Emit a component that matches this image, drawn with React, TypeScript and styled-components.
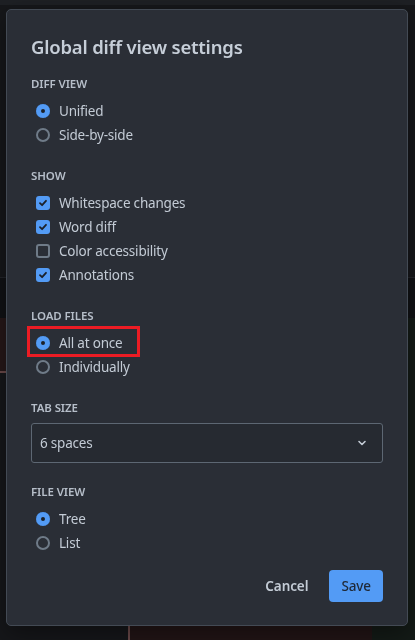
import React from "react";
import styled, { createGlobalStyle } from "styled-components";

const Global = createGlobalStyle`
  html, body { margin: 0; padding: 0; background: #16171a; }
  body { font-family: "Noto Sans", "Open Sans", sans-serif; }
  * { box-sizing: border-box; }
`;

const Backdrop = styled.div`
  width: 415px;
  height: 640px;
  display: grid;
  grid-template-columns: 128px 2px 242px 1fr;
  grid-template-rows: 5px 272px 1px 40px 53px 2px 1fr;
  background: #16171a;
  overflow: hidden;
`;

const Cell = styled.div<{ $bg: string; $col: string; $row: string }>`
  background: ${(p) => p.$bg};
  grid-column: ${(p) => p.$col};
  grid-row: ${(p) => p.$row};
`;

const Dialog = styled.div`
  position: fixed;
  top: 9px;
  left: 6px;
  width: 402px;
  height: 617px;
  background: #2a2e36;
  border: 1px solid #434a54;
  border-radius: 5px;
  padding: 23px 24px 23px 24px;
  display: flex;
  flex-direction: column;
  box-shadow: 0 8px 24px rgba(0, 0, 0, 0.4);
`;

const Title = styled.h2`
  margin: 0 0 13px 0;
  font-size: 18.5px;
  letter-spacing: -0.2px;
  line-height: 28px;
  font-weight: 600;
  color: #c6ced8;
`;

const Section = styled.div`
  display: flex;
  flex-direction: column;
  & + & {
    margin-top: 19px;
  }
`;

const Label = styled.div`
  font-size: 11.5px;
  letter-spacing: -0.1px;
  line-height: 20px;
  font-weight: 600;
  color: #b6bec9;
  text-transform: uppercase;
  margin-bottom: 5px;
`;

const Row = styled.label`
  display: flex;
  align-items: center;
  gap: 9px;
  height: 24px;
  padding-left: 5px;
  font-size: 13.5px;
  letter-spacing: -0.2px;
  color: #c3cbd5;
  position: relative;
  align-self: flex-start;
`;

const RadioMark = styled.span<{ $on?: boolean }>`
  width: 14px;
  height: 14px;
  border-radius: 50%;
  flex: none;
  ${(p) =>
    p.$on
      ? `background: #539bf5; box-shadow: inset 0 0 0 5px #539bf5, inset 0 0 0 14px #1c2128;`
      : `border: 2px solid #6f7b88;`}
`;

const CheckMark = styled.span<{ $on?: boolean }>`
  width: 14px;
  height: 14px;
  border-radius: 3px;
  flex: none;
  display: flex;
  align-items: center;
  justify-content: center;
  ${(p) => (p.$on ? `background: #539bf5;` : `border: 2px solid #6f7b88;`)}
`;

const Highlight = styled.span`
  position: absolute;
  left: -4px;
  top: -5px;
  width: 113px;
  height: 31px;
  border: 3px solid #ec1c24;
  pointer-events: none;
`;

const Select = styled.div`
  height: 40px;
  border: 1px solid #5d6773;
  border-radius: 3px;
  display: flex;
  align-items: center;
  justify-content: space-between;
  padding: 0 14px 0 8px;
  font-size: 13.5px;
  letter-spacing: -0.2px;
  color: #c3cbd5;
  background: #262a31;
`;

const Footer = styled.div`
  margin-top: auto;
  display: flex;
  justify-content: flex-end;
  align-items: center;
  gap: 9px;
`;

const Button = styled.button<{ $primary?: boolean }>`
  font-family: inherit;
  font-size: 13.5px;
  letter-spacing: -0.1px;
  font-weight: ${(p) => (p.$primary ? 500 : 600)};
  height: 32px;
  border-radius: 4px;
  border: none;
  padding: 0 12px;
  cursor: pointer;
  background: ${(p) => (p.$primary ? "#539bf5" : "transparent")};
  color: ${(p) => (p.$primary ? "#1f2937" : "#c3cbd5")};
`;

const Radio = ({ on, children, hl }: { on?: boolean; children: React.ReactNode; hl?: boolean }) => (
  <Row>
    <RadioMark $on={on} />
    {children}
    {hl && <Highlight />}
  </Row>
);

const Check = ({ on, children }: { on?: boolean; children: React.ReactNode }) => (
  <Row>
    <CheckMark $on={on}>
      {on && (
        <svg width="10" height="10" viewBox="0 0 10 10">
          <path d="M2 5.2 L4.1 7.2 L8 2.8" fill="none" stroke="#1c2128" strokeWidth="1.8" strokeLinecap="round" strokeLinejoin="round" />
        </svg>
      )}
    </CheckMark>
    {children}
  </Row>
);

export default function App() {
  return (
    <>
      <Global />
      <Backdrop>
        <Cell $bg="#1e2024" $col="1 / -1" $row="1" />
        <Cell $bg="#16171a" $col="1 / -1" $row="2" />
        <Cell $bg="#23252a" $col="1 / -1" $row="3" />
        <Cell $bg="#111215" $col="1 / -1" $row="4" />
        <Cell $bg="#261819" $col="1 / 4" $row="5" />
        <Cell $bg="#141b17" $col="4" $row="5 / -1" />
        <Cell $bg="#6b4a4a" $col="1 / 4" $row="6" />
        <Cell $bg="#16171a" $col="1" $row="7" />
        <Cell $bg="#6b4a4a" $col="2" $row="7" />
        <Cell $bg="#221516" $col="3" $row="7" />
      </Backdrop>
      <Dialog>
        <Title>Global diff view settings</Title>
        <Section>
          <Label>Diff view</Label>
          <Radio on>Unified</Radio>
          <Radio>Side-by-side</Radio>
        </Section>
        <Section>
          <Label>Show</Label>
          <Check on>Whitespace changes</Check>
          <Check on>Word diff</Check>
          <Check>Color accessibility</Check>
          <Check on>Annotations</Check>
        </Section>
        <Section>
          <Label>Load files</Label>
          <Radio on hl>All at once</Radio>
          <Radio>Individually</Radio>
        </Section>
        <Section>
          <Label>Tab size</Label>
          <Select>
            <span>6 spaces</span>
            <svg width="12" height="12" viewBox="0 0 12 12">
              <path d="M3 4.5 L6 7.5 L9 4.5" fill="none" stroke="#c3cbd5" strokeWidth="1.6" strokeLinecap="round" strokeLinejoin="round" />
            </svg>
          </Select>
        </Section>
        <Section>
          <Label>File view</Label>
          <Radio on>Tree</Radio>
          <Radio>List</Radio>
        </Section>
        <Footer>
          <Button>Cancel</Button>
          <Button $primary>Save</Button>
        </Footer>
      </Dialog>
    </>
  );
}
